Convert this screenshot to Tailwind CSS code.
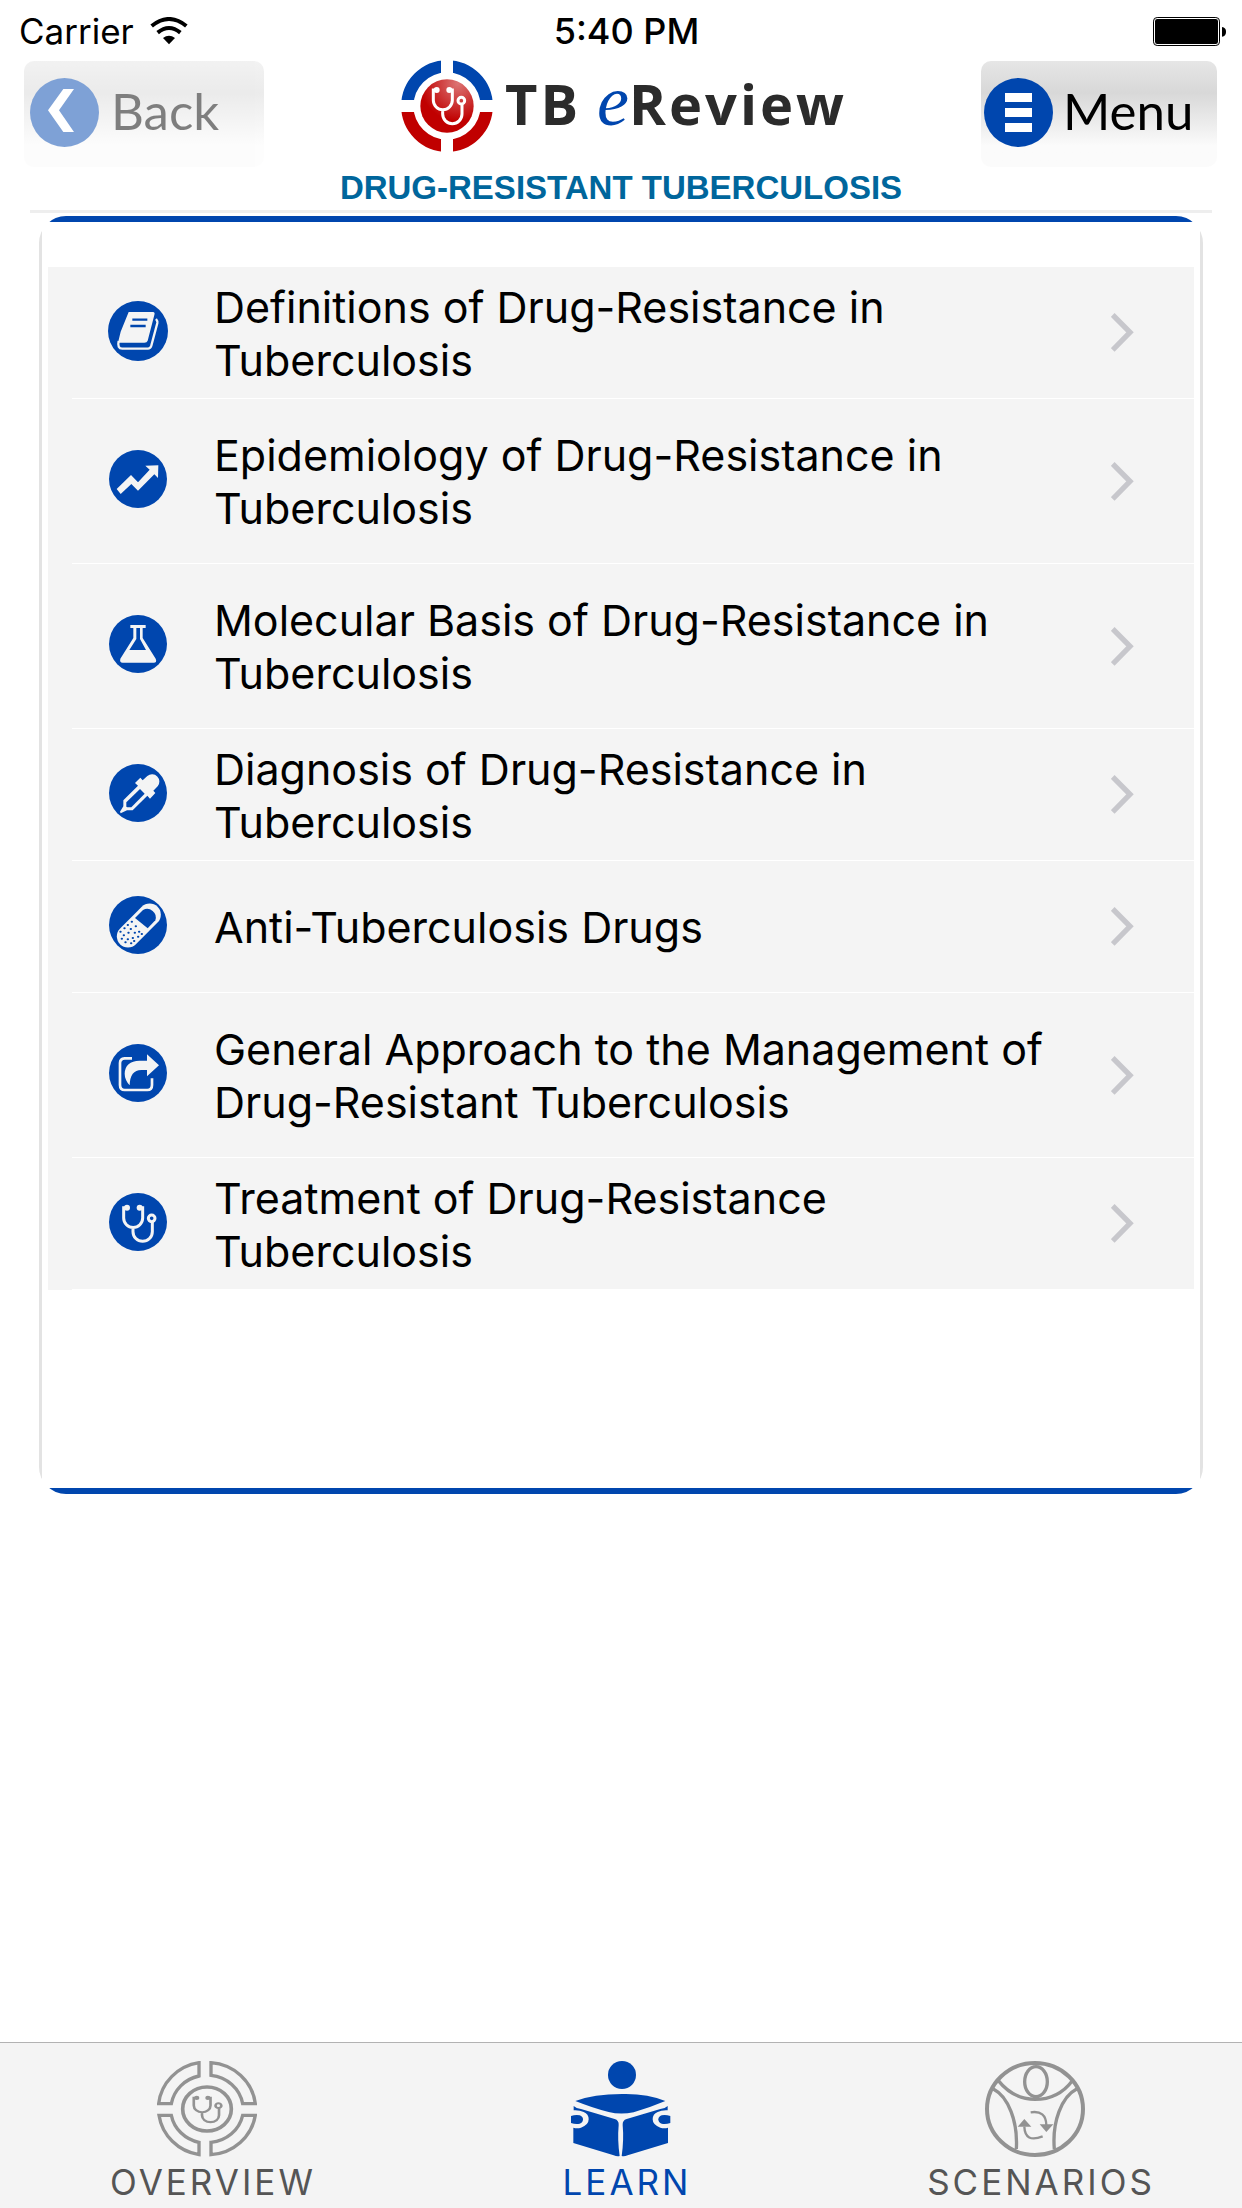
<!DOCTYPE html>
<html lang="en">
<head>
  <meta charset="UTF-8" />
  <meta name="viewport" content="width=device-width, initial-scale=1.0" />
  <title>TB eReview</title>
  <script src="https://cdn.jsdelivr.net/npm/@tailwindcss/browser@4"></script>
</head>
<body class="bg-white text-black font-[Inter,sans-serif] flex flex-col min-h-screen">

  <svg class="hidden">
    <symbol id="steth" viewBox="0 0 180 180" overflow="visible">
      <g fill="none" stroke="currentColor" stroke-width="9">
        <path d="M57 47H47V78A28 28 0 0 0 104 78V47H95M75 107V119A29 29 0 0 0 133 119V90" />
        <circle cx="131" cy="79" r="10" />
      </g>
      <circle cx="57" cy="47" r="9" fill="currentColor" />
      <circle cx="95" cy="47" r="9" fill="currentColor" />
    </symbol>
    <symbol id="chevron" viewBox="0 0 69 117">
      <path d="M5 6L57 58L5 111" fill="none" stroke="#c7c7cc" stroke-width="16" />
    </symbol>
  </svg>

  <!-- status bar -->
  <div class="grid grid-cols-3 items-center h-[60px] pt-[2px] pl-[19px] pr-4 text-[36px] leading-[58px]">
    <div class="flex items-center gap-4">
      <span class="text-[35px]">Carrier</span>
      <svg class="w-[38px] h-[28px]" viewBox="0 0 114 84">
        <g fill="none" stroke="#000" stroke-width="12">
          <path d="M5 27Q57 -15 109 27" />
          <path d="M23 47Q57 19 91 47" />
        </g>
        <path d="M39 63Q57 49 75 63L57 82Z" />
      </svg>
    </div>
    <span class="text-center font-medium pl-2">5:40 PM</span>
    <svg class="justify-self-end w-[73px] h-[29px]" viewBox="0 0 219 87">
      <rect x="1.5" y="1.5" width="198" height="84" rx="11" fill="none" stroke="#000" stroke-width="3" />
      <rect x="6" y="6" width="189" height="75" rx="7" />
      <path d="M207 30Q219 32 219 44Q219 57 207 59Z" />
    </svg>
  </div>

  <!-- header -->
  <header class="px-6">
    <div class="grid grid-cols-[1fr_auto_1fr] items-start">
      <button type="button" class="mt-px w-[240px] h-[106px] flex items-center gap-3 pl-[6px] pb-1 rounded-[10px] bg-linear-to-b from-[#e6e6e6] via-[#d8d8d8] via-30% to-[#fbfbfb] to-80% opacity-50 text-[51px] font-[Lato,sans-serif]">
        <svg class="w-[69px] h-[69px]" viewBox="0 0 207 207">
          <circle cx="103.5" cy="103.5" r="103.5" fill="#0046ae" />
          <path d="M100 33H132L87 97L132 162H100L54 97Z" fill="#fff" />
        </svg>
        <span class="pb-[2px]">Back</span>
      </button>

      <div class="flex flex-col items-center">
        <h1 class="flex items-start gap-3 pl-[6px] text-[#2b2b2b]">
          <svg class="w-[92px] h-[92px]" viewBox="66 180 276 276">
            <defs>
              <radialGradient id="ball" cx="0.7" cy="0.08" r="0.7">
                <stop offset="0" stop-color="#dc7474" />
                <stop offset="1" stop-color="#c00000" />
              </radialGradient>
            </defs>
            <g fill="none" stroke-width="37">
              <path d="M85 318A119 119 0 0 1 323 318" stroke="#0046ae" />
              <path d="M85 318A119 119 0 0 0 323 318" stroke="#c00000" />
            </g>
            <path d="M186 180H222V456H186ZM66 300H342V336H66Z" fill="#fff" />
            <circle cx="204" cy="318" r="80" fill="url(#ball)" />
            <use href="#steth" x="116" y="223" width="180" height="180" class="text-white" />
          </svg>
          <span class="flex items-baseline text-[56px] leading-[86px] font-bold font-['Open_Sans',sans-serif] tracking-[3px]">TB<i class="ml-4 text-[72px] leading-none font-normal text-[#0046ae] font-['Liberation_Serif',serif] tracking-normal">e</i>Review</span>
        </h1>
        <h2 class="text-[33px] leading-[43px] mt-[14px] font-bold text-[#00669c] font-['Liberation_Sans',sans-serif]">DRUG-RESISTANT TUBERCULOSIS</h2>
      </div>

      <button type="button" class="justify-self-end mt-px mr-px w-[236px] h-[106px] flex items-center gap-[10px] pl-[3px] pb-1 rounded-[10px] bg-linear-to-b from-[#e6e6e6] via-[#d8d8d8] via-30% to-[#fbfbfb] to-80% text-[51px] font-[Lato,sans-serif]">
        <svg class="w-[69px] h-[69px]" viewBox="0 0 207 207">
          <circle cx="103.5" cy="103.5" r="103.5" fill="#0046ae" />
          <path d="M63 45H144V72H63ZM63 90H144V117H63ZM63 135H144V162H63Z" fill="#fff" />
        </svg>
        <span class="pb-[2px]">Menu</span>
      </button>
    </div>
    <div class="mx-[6px] mt-px h-[3px] bg-[#eeeeee]"></div>
  </header>

  <!-- topics -->
  <main class="flex-1 px-[39px] pt-[3px]">
    <div class="rounded-[27px] overflow-hidden">
      <div class="h-[6px] bg-[#0046ae]"></div>
      <div class="border-x-3 border-[#e3e3e3] px-[6px] pt-[45px] pb-[198px]">
        <ul class="bg-[#f4f4f4] pl-6 text-[43px] leading-[53px]">
          <li>
            <a href="#" class="flex items-center h-[132px] pl-9 pr-[60px] border-b border-white">
              <svg class="w-[60px] h-[60px] mb-1 shrink-0" viewBox="0 0 180 180">
                <circle cx="90" cy="90" r="90" fill="#0046ae" />
                <path d="M62 33H135Q142 34 139 42L119 119Q117 125 109 125H30L38 92Z" fill="#f4f4f4" />
                <path d="M32 120Q27 143 43 143H120Q127 143 130 134L148 66Q149 60 144 54" fill="none" stroke="#f4f4f4" stroke-width="7" />
                <path d="M73 56H118M67 75H113" stroke="#0046ae" stroke-width="7" />
              </svg>
              <span class="flex-1 ml-[46px] mr-8 pt-[2px]">Definitions of Drug-Resistance in Tuberculosis</span>
              <svg class="w-[23px] h-[39px] shrink-0"><use href="#chevron" /></svg>
            </a>
          </li>
          <li>
            <a href="#" class="flex items-center h-[165px] pl-9 pr-[60px] border-b border-white">
              <svg class="w-[60px] h-[60px] mb-1 shrink-0" viewBox="0 0 180 180">
                <circle cx="90" cy="90" r="87" fill="#0046ae" />
                <path d="M26 120L69 78L90 100L125 62L112 50L151 49L150 87L139 76L90 125L70 105L38 135Z" fill="#f4f4f4" />
              </svg>
              <span class="flex-1 ml-[46px] mr-8 pt-[2px]">Epidemiology of Drug-Resistance in Tuberculosis</span>
              <svg class="w-[23px] h-[39px] shrink-0"><use href="#chevron" /></svg>
            </a>
          </li>
          <li>
            <a href="#" class="flex items-center h-[165px] pl-9 pr-[60px] border-b border-white">
              <svg class="w-[60px] h-[60px] mb-1 shrink-0" viewBox="0 0 180 180">
                <circle cx="90" cy="90" r="87" fill="#0046ae" />
                <path d="M67 33H113V42H104V72L143 134Q148 146 137 146H44Q34 146 37 134L76 72V42H67Z" fill="#f4f4f4" />
                <path d="M85 42H96V75L114 108H64L85 75Z" fill="#0046ae" />
              </svg>
              <span class="flex-1 ml-[46px] mr-8 pt-[2px]">Molecular Basis of Drug-Resistance in Tuberculosis</span>
              <svg class="w-[23px] h-[39px] shrink-0"><use href="#chevron" /></svg>
            </a>
          </li>
          <li>
            <a href="#" class="flex items-center h-[132px] pl-9 pr-[60px] border-b border-white">
              <svg class="w-[60px] h-[60px] mb-1 shrink-0" viewBox="0 0 180 180">
                <circle cx="90" cy="90" r="87" fill="#0046ae" />
                <path d="M104 52L118 39A22 22 0 0 1 149 70L136 83L142 90L126 107L118 98L74 142H57L38 151L36 146L46 130V112L90 68L81 60L97 44Z" fill="#f4f4f4" />
                <path d="M96 78L55 118V131L58 133H70L110 92Z" fill="#0046ae" />
              </svg>
              <span class="flex-1 ml-[46px] mr-8 pt-[2px]">Diagnosis of Drug-Resistance in Tuberculosis</span>
              <svg class="w-[23px] h-[39px] shrink-0"><use href="#chevron" /></svg>
            </a>
          </li>
          <li>
            <a href="#" class="flex items-center h-[132px] pl-9 pr-[60px] border-b border-white">
              <svg class="w-[60px] h-[60px] mb-1 shrink-0" viewBox="0 0 180 180">
                <circle cx="90" cy="90" r="87" fill="#0046ae" />
                <path d="M60 124L125 59" stroke="#f4f4f4" stroke-width="67" stroke-linecap="round" />
                <path d="M81 69L105 45A26 26 0 0 1 142 76L119 100Z" fill="#0046ae" />
                <path d="M71 80h1M59 90h1M83 94h1M49 100h1M68 102h1M37 110h1M61 113h1M80 113h1M93 110h1M47 121h1M101 117h1M90 125h1M74 129h1M59 133h1M41 131h1M52 142h1M69 145h1M78 138h1" stroke="#0046ae" stroke-width="6" stroke-linecap="round" />
              </svg>
              <span class="flex-1 ml-[46px] mr-8 pt-[2px]">Anti-Tuberculosis Drugs</span>
              <svg class="w-[23px] h-[39px] shrink-0"><use href="#chevron" /></svg>
            </a>
          </li>
          <li>
            <a href="#" class="flex items-center h-[165px] pl-9 pr-[60px] border-b border-white">
              <svg class="w-[60px] h-[60px] mb-1 shrink-0" viewBox="0 0 180 180">
                <circle cx="90" cy="90" r="87" fill="#0046ae" />
                <path d="M72 46H50Q36 47 36 60V126Q36 141 50 141H118Q132 141 132 126V106" fill="none" stroke="#f4f4f4" stroke-width="8" />
                <path d="M117 34L153 67L117 100V81H100Q66 81 65 127Q50 110 50 92Q51 54 95 53H117Z" fill="#f4f4f4" />
              </svg>
              <span class="flex-1 ml-[46px] mr-8 pt-[2px]">General Approach to the Management of Drug-Resistant Tuberculosis</span>
              <svg class="w-[23px] h-[39px] shrink-0"><use href="#chevron" /></svg>
            </a>
          </li>
          <li>
            <a href="#" class="flex items-center h-[132px] pl-9 pr-[60px] border-b border-white">
              <svg class="w-[60px] h-[60px] mb-1 shrink-0" viewBox="0 0 180 180">
                <circle cx="90" cy="90" r="87" fill="#0046ae" />
                <use href="#steth" width="180" height="180" class="text-[#f4f4f4]" />
              </svg>
              <span class="flex-1 ml-[46px] mr-8 pt-[2px]">Treatment of Drug-Resistance Tuberculosis</span>
              <svg class="w-[23px] h-[39px] shrink-0"><use href="#chevron" /></svg>
            </a>
          </li>
        </ul>
      </div>
      <div class="h-[6px] bg-[#0046ae]"></div>
    </div>
  </main>

  <!-- tab bar -->
  <nav class="grid grid-cols-3 border-t border-[#b2b2b2] bg-[#f4f4f4] pt-[18px] text-[35px] leading-[51px] tracking-[3px] text-[#555555]">
    <a href="#" class="flex flex-col items-center">
      <svg class="w-[100px] h-[96px]" viewBox="201 93 300 288" fill="none" stroke="#929292" stroke-width="10">
        <path d="M327 98A145 140 0 0 0 206 221H244A108 103 0 0 1 327 138Z" />
        <path d="M363 98A145 140 0 0 1 496 221H458A108 103 0 0 0 363 136Z" />
        <path d="M363 374A145 140 0 0 0 496 256H458A108 103 0 0 1 363 337Z" />
        <path d="M327 374A145 140 0 0 1 207 256H244A108 103 0 0 0 327 337Z" />
        <ellipse cx="351" cy="237" rx="73" ry="66" stroke-width="11" />
        <g transform="translate(270 170) scale(.88 .72)" class="text-[#929292]" stroke="none">
          <use href="#steth" width="180" height="180" />
        </g>
      </svg>
      <span class="pl-3">OVERVIEW</span>
    </a>
    <a href="#" class="flex flex-col items-center text-[#0046ae]">
      <svg class="w-[100px] h-[96px]" viewBox="152 93 300 288" fill="#0046ae">
        <circle cx="305" cy="135" r="42" />
        <path d="M165 213Q220 192 305 192Q380 190 435 213Q390 232 340 247Q300 255 265 246Q220 235 165 213Z" />
        <g id="page">
          <path d="M160 228Q168 236 182 237L283 267Q296 271 295 285Q291 330 298 378Q290 380 280 376L159 339V293Q170 296 182 293Q205 285 205 268Q205 252 190 246Q178 240 160 241Z" />
          <path d="M152 258Q165 254 178 256Q188 260 188 268Q188 278 178 281Q165 283 152 279Z" />
        </g>
        <use href="#page" transform="translate(602 0) scale(-1 1)" />
      </svg>
      <span class="pl-3">LEARN</span>
    </a>
    <a href="#" class="flex flex-col items-center">
      <svg class="w-[100px] h-[96px]" viewBox="225 93 300 288" fill="none" stroke="#929292" stroke-width="10">
        <ellipse cx="375" cy="237" rx="144" ry="138" stroke-width="12" />
        <ellipse cx="378" cy="155" rx="34" ry="45" />
        <path d="M265 152Q310 208 375 208Q445 208 487 152" />
        <path d="M250 177C295 200 324 275 319 357M500 177C455 200 426 275 433 357" />
        <path d="M362 247Q408 240 409 285M398 319Q345 340 343 290" stroke-width="7" />
        <path d="M389 283H430L409 306ZM323 290H364L343 267Z" fill="#929292" stroke="none" />
      </svg>
      <span class="pl-3">SCENARIOS</span>
    </a>
  </nav>
</body>
</html>
